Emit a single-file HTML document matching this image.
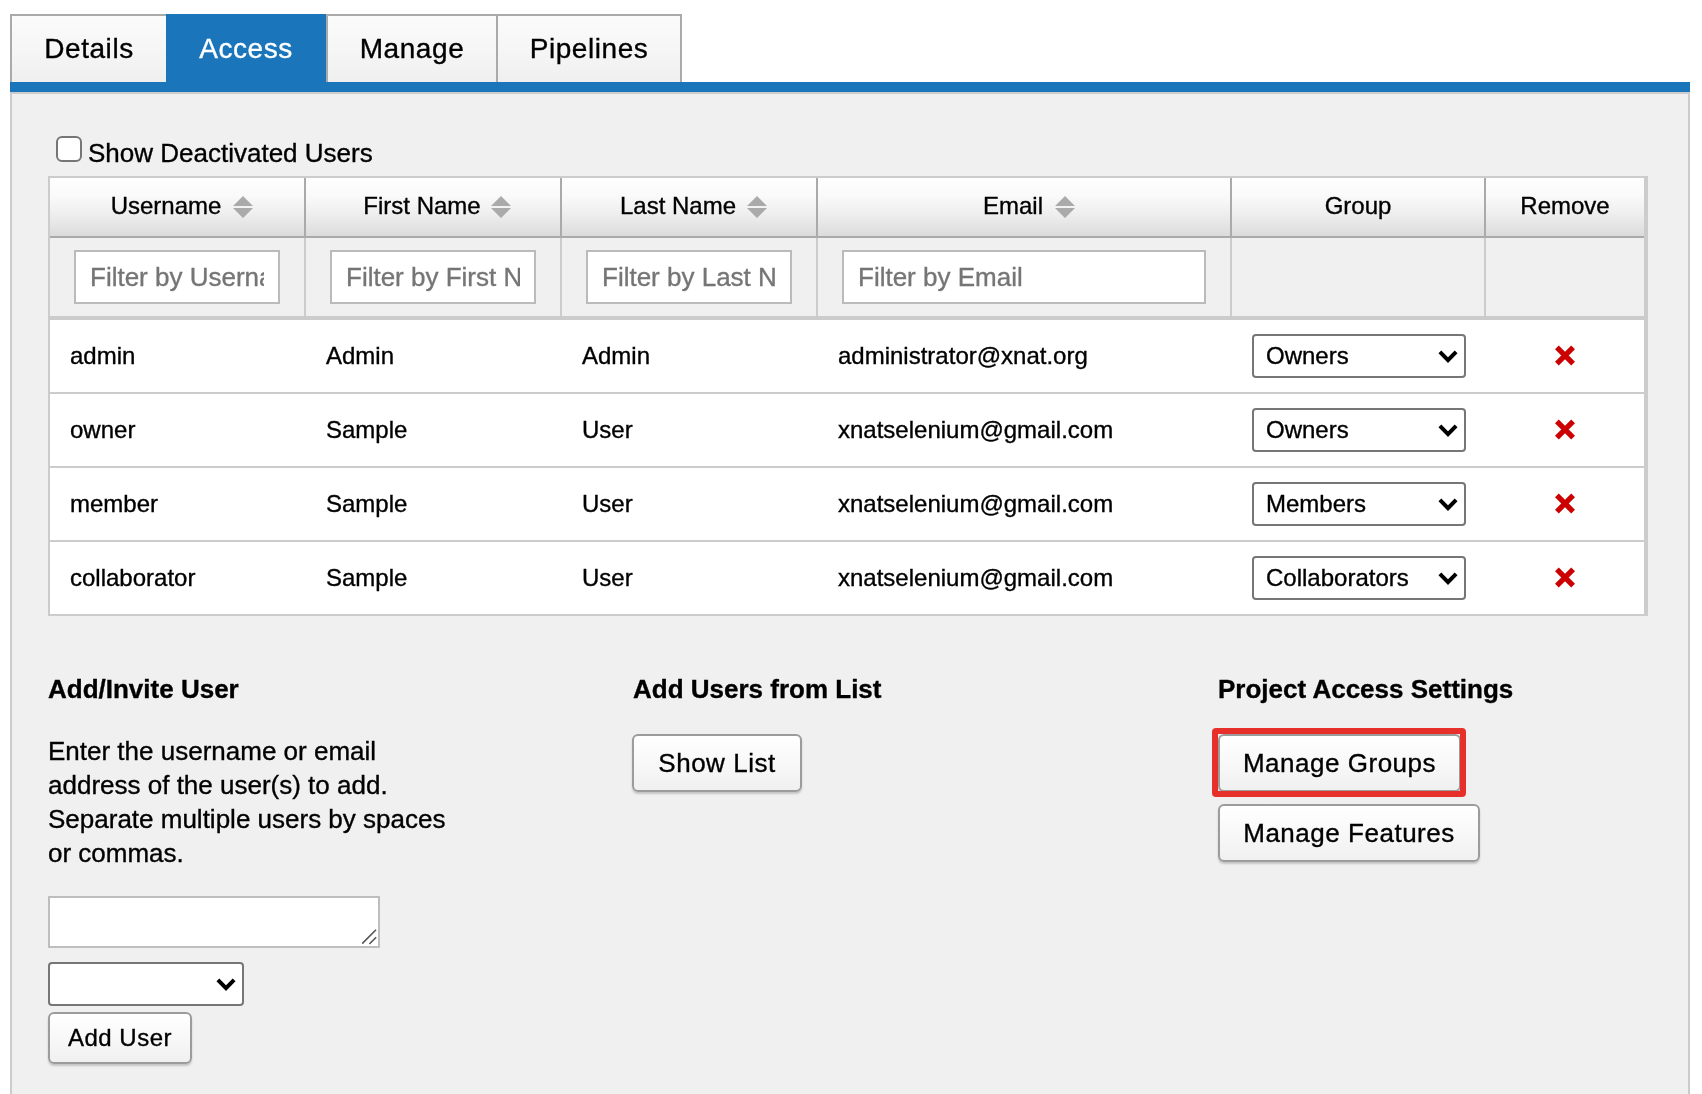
<!DOCTYPE html>
<html>
<head>
<meta charset="utf-8">
<title>Project Access</title>
<style>
  html, body { margin: 0; padding: 0; background: #fff; }
  body {
    width: 1702px; height: 1094px; overflow: hidden; position: relative;
    font-family: "Liberation Sans", sans-serif; font-size: 26px; color: #000;
  }
  * { box-sizing: border-box; }
  #page { position: absolute; left: 0; top: 0; width: 1702px; height: 1094px; will-change: transform; -webkit-text-stroke: 0.35px currentColor; }
  .abs { position: absolute; }

  /* ---------- tabs ---------- */
  .tab {
    position: absolute; top: 14px; height: 68px; line-height: 68px;
    text-align: center; font-size: 28px; color: #000; white-space: nowrap;
    border: 2px solid #aaa; border-bottom: 0;
    background: linear-gradient(#fbfbfb 0%, #f6f6f6 50%, #efefef 100%);
  }
  .tab span { position: relative; top: -1px; }
  .tab.active { background: #1a75bb; border-color: #1a75bb; color: #fff; }
  #bluebar { left: 10px; top: 82px; width: 1680px; height: 10px; background: #1a75bb; }
  #panel {
    left: 10px; top: 92px; width: 1680px; height: 1010px;
    background: #f0f0f0; border: 2px solid #ccc; border-bottom: 0;
  }

  /* ---------- checkbox row ---------- */
  #cb { left: 56px; top: 136px; width: 26px; height: 26px; background: #fff;
        border: 2px solid #767676; border-radius: 6px; }
  #cblabel { left: 88px; top: 138px; line-height: 30px; font-size: 26px; white-space: nowrap; }

  /* ---------- data table ---------- */
  #tbl { left: 48px; top: 176px; width: 1600px; height: 440px;
         border: 2px solid #ccc; border-right-width: 4px; background: #fff; }
  #thead { left: 0; top: 0; width: 1594px; height: 60px;
           background: linear-gradient(#fefefe 0%, #fafafa 30%, #ededed 65%, #dbdbdb 100%);
           border-bottom: 2px solid #aaa; }
  .th { position: absolute; top: 0; height: 58px; line-height: 58px; font-size: 24px;
        text-align: center; white-space: nowrap; }
  .th span { position: relative; top: -1px; }
  .vsep { position: absolute; top: 0; width: 2px; height: 58px; background: #aaa; }
  .sort { position: absolute; top: 18px; width: 20px; height: 22px; }
  #frow { left: 0; top: 60px; width: 1594px; height: 82px; background: #f0f0f0;
          border-bottom: 4px solid #ccc; }
  .fsep { position: absolute; top: 0; width: 2px; height: 78px; background: #ccc; }
  .filt { position: absolute; top: 12px; height: 54px; background: #fff; border: 2px solid #bbb;
          font-size: 26px; line-height: 50px; color: #757575; padding-left: 14px;
          white-space: nowrap; overflow: hidden; }
  .filt i { font-style: normal; display: block; overflow: hidden; }

  .tab { letter-spacing: 0.02em; }
  /* ---------- body rows ---------- */
  .row { position: absolute; left: 0; width: 1594px; height: 74px; background: #fff;
         border-bottom: 2px solid #ccc; font-size: 24px; line-height: 72px; white-space: nowrap; }
  .row b { position: absolute; top: 0; font-weight: normal; }
  .sel { position: absolute; height: 44px; background: #fff; border: 2px solid #767676;
         border-radius: 4px; font-size: 24px; line-height: 40px; padding-left: 12px; white-space: nowrap; }
  .sel svg { position: absolute; right: 6px; top: 13.5px; width: 20px; height: 14px; }
  .rx { position: absolute; left: 1504px; top: 25px; width: 22px; height: 21px; }

  /* ---------- bottom section ---------- */
  .h { position: absolute; top: 674px; font-size: 26px; font-weight: bold; line-height: 30px; white-space: nowrap; }
  #para { left: 48px; top: 734px; width: 430px; font-size: 26px; line-height: 34px; }
  #ta { left: 48px; top: 896px; width: 332px; height: 52px; background: #fff; border: 2px solid #bebebe; }
  #ta svg { position: absolute; right: 1px; bottom: 1px; width: 17px; height: 17px; }
  .btn { position: absolute; height: 58px; line-height: 54px; font-size: 26px; letter-spacing: 0.02em;
         text-align: center; white-space: nowrap; color: #000;
         border: 2px solid #9c9c9c; border-radius: 6px;
         background: linear-gradient(#ffffff 0%, #f8f8f8 50%, #f0f0f0 100%);
         box-shadow: 0 2px 2px rgba(0,0,0,0.18); }
  .btn.sm { height: 52px; line-height: 48px; font-size: 24px; }
  #hl { left: 1212px; top: 728px; width: 254px; height: 69px; border: 6px solid #e8302a; border-radius: 4px; }
</style>
</head>
<body>
<div id="page">

<!-- tabs -->
<div class="tab" style="left:10px; width:158px;"><span>Details</span></div>
<div class="tab active" style="left:166px; width:160px;"><span>Access</span></div>
<div class="tab" style="left:326px; width:172px;"><span>Manage</span></div>
<div class="tab" style="left:496px; width:186px;"><span>Pipelines</span></div>
<div id="bluebar" class="abs"></div>
<div id="panel" class="abs"></div>


<div id="cb" class="abs"></div>
<div id="cblabel" class="abs">Show Deactivated Users</div>

<div id="tbl" class="abs">
  <div id="thead" class="abs">
    <div class="th" style="left:0; width:254px;"><span style="left:-11px">Username</span></div>
    <svg class="sort" style="left:183px" viewBox="0 0 20 22"><path d="M10 0 L20 10 L0 10 Z M0 12 L20 12 L10 22 Z" fill="#aaa"/></svg>
    <div class="vsep" style="left:254px"></div>
    <div class="th" style="left:256px; width:254px;"><span style="left:-11px">First Name</span></div>
    <svg class="sort" style="left:441px" viewBox="0 0 20 22"><path d="M10 0 L20 10 L0 10 Z M0 12 L20 12 L10 22 Z" fill="#aaa"/></svg>
    <div class="vsep" style="left:510px"></div>
    <div class="th" style="left:512px; width:254px;"><span style="left:-11px">Last Name</span></div>
    <svg class="sort" style="left:697px" viewBox="0 0 20 22"><path d="M10 0 L20 10 L0 10 Z M0 12 L20 12 L10 22 Z" fill="#aaa"/></svg>
    <div class="vsep" style="left:766px"></div>
    <div class="th" style="left:768px; width:412px;"><span style="left:-11px">Email</span></div>
    <svg class="sort" style="left:1005px" viewBox="0 0 20 22"><path d="M10 0 L20 10 L0 10 Z M0 12 L20 12 L10 22 Z" fill="#aaa"/></svg>
    <div class="vsep" style="left:1180px"></div>
    <div class="th" style="left:1182px; width:252px;"><span>Group</span></div>
    <div class="vsep" style="left:1434px"></div>
    <div class="th" style="left:1436px; width:158px;"><span>Remove</span></div>
  </div>
  <div id="frow" class="abs">
    <div class="filt" style="left:24px; width:206px;"><i style="width:174px">Filter by Username</i></div>
    <div class="fsep" style="left:254px"></div>
    <div class="filt" style="left:280px; width:206px;"><i style="width:174px">Filter by First Name</i></div>
    <div class="fsep" style="left:510px"></div>
    <div class="filt" style="left:536px; width:206px;"><i style="width:174px">Filter by Last Name</i></div>
    <div class="fsep" style="left:766px"></div>
    <div class="filt" style="left:792px; width:364px;"><i>Filter by Email</i></div>
    <div class="fsep" style="left:1180px"></div>
    <div class="fsep" style="left:1434px"></div>
  </div>
  <div class="row" style="top:142px">
    <b style="left:20px">admin</b><b style="left:276px">Admin</b><b style="left:532px">Admin</b><b style="left:788px">administrator@xnat.org</b>
    <div class="sel" style="left:1202px; top:14px; width:214px;">Owners<svg viewBox="0 0 20 14"><path d="M1.9 1.9 L10 10.2 L18.1 1.9" fill="none" stroke="#000" stroke-width="4" stroke-linecap="butt" stroke-linejoin="miter"/></svg></div>
    <svg class="rx" viewBox="0 0 22 21"><path d="M2.9 2.4 L19.1 18.6 M19.1 2.4 L2.9 18.6" fill="none" stroke="#c00" stroke-width="5.3"/></svg>
  </div>
  <div class="row" style="top:216px">
    <b style="left:20px">owner</b><b style="left:276px">Sample</b><b style="left:532px">User</b><b style="left:788px">xnatselenium@gmail.com</b>
    <div class="sel" style="left:1202px; top:14px; width:214px;">Owners<svg viewBox="0 0 20 14"><path d="M1.9 1.9 L10 10.2 L18.1 1.9" fill="none" stroke="#000" stroke-width="4" stroke-linecap="butt" stroke-linejoin="miter"/></svg></div>
    <svg class="rx" viewBox="0 0 22 21"><path d="M2.9 2.4 L19.1 18.6 M19.1 2.4 L2.9 18.6" fill="none" stroke="#c00" stroke-width="5.3"/></svg>
  </div>
  <div class="row" style="top:290px">
    <b style="left:20px">member</b><b style="left:276px">Sample</b><b style="left:532px">User</b><b style="left:788px">xnatselenium@gmail.com</b>
    <div class="sel" style="left:1202px; top:14px; width:214px;">Members<svg viewBox="0 0 20 14"><path d="M1.9 1.9 L10 10.2 L18.1 1.9" fill="none" stroke="#000" stroke-width="4" stroke-linecap="butt" stroke-linejoin="miter"/></svg></div>
    <svg class="rx" viewBox="0 0 22 21"><path d="M2.9 2.4 L19.1 18.6 M19.1 2.4 L2.9 18.6" fill="none" stroke="#c00" stroke-width="5.3"/></svg>
  </div>
  <div class="row" style="top:364px">
    <b style="left:20px">collaborator</b><b style="left:276px">Sample</b><b style="left:532px">User</b><b style="left:788px">xnatselenium@gmail.com</b>
    <div class="sel" style="left:1202px; top:14px; width:214px;">Collaborators<svg viewBox="0 0 20 14"><path d="M1.9 1.9 L10 10.2 L18.1 1.9" fill="none" stroke="#000" stroke-width="4" stroke-linecap="butt" stroke-linejoin="miter"/></svg></div>
    <svg class="rx" viewBox="0 0 22 21"><path d="M2.9 2.4 L19.1 18.6 M19.1 2.4 L2.9 18.6" fill="none" stroke="#c00" stroke-width="5.3"/></svg>
  </div>

</div>


<div class="h" style="left:48px">Add/Invite User</div>
<div class="h" style="left:633px">Add Users from List</div>
<div class="h" style="left:1218px">Project Access Settings</div>

<div id="para" class="abs">Enter the username or email<br>address of the user(s) to add.<br>Separate multiple users by spaces<br>or commas.</div>
<div id="ta" class="abs"><svg viewBox="0 0 17 17"><path d="M2.2 15.6 L16 1.8 M9.4 16 L16.2 9.2" fill="none" stroke="#555" stroke-width="1.6"/></svg></div>
<div class="sel" style="left:48px; top:962px; width:196px;"><svg viewBox="0 0 20 14"><path d="M1.9 1.9 L10 10.2 L18.1 1.9" fill="none" stroke="#000" stroke-width="4" stroke-linecap="butt" stroke-linejoin="miter"/></svg></div>
<div class="btn sm" style="left:48px; top:1012px; width:144px;">Add User</div>

<div class="btn" style="left:632px; top:734px; width:170px;">Show List</div>

<div class="btn" style="left:1218px; top:734px; width:243px;">Manage Groups</div>
<div id="hl" class="abs"></div>
<div class="btn" style="left:1218px; top:804px; width:262px;">Manage Features</div>


</div>
</body>
</html>
